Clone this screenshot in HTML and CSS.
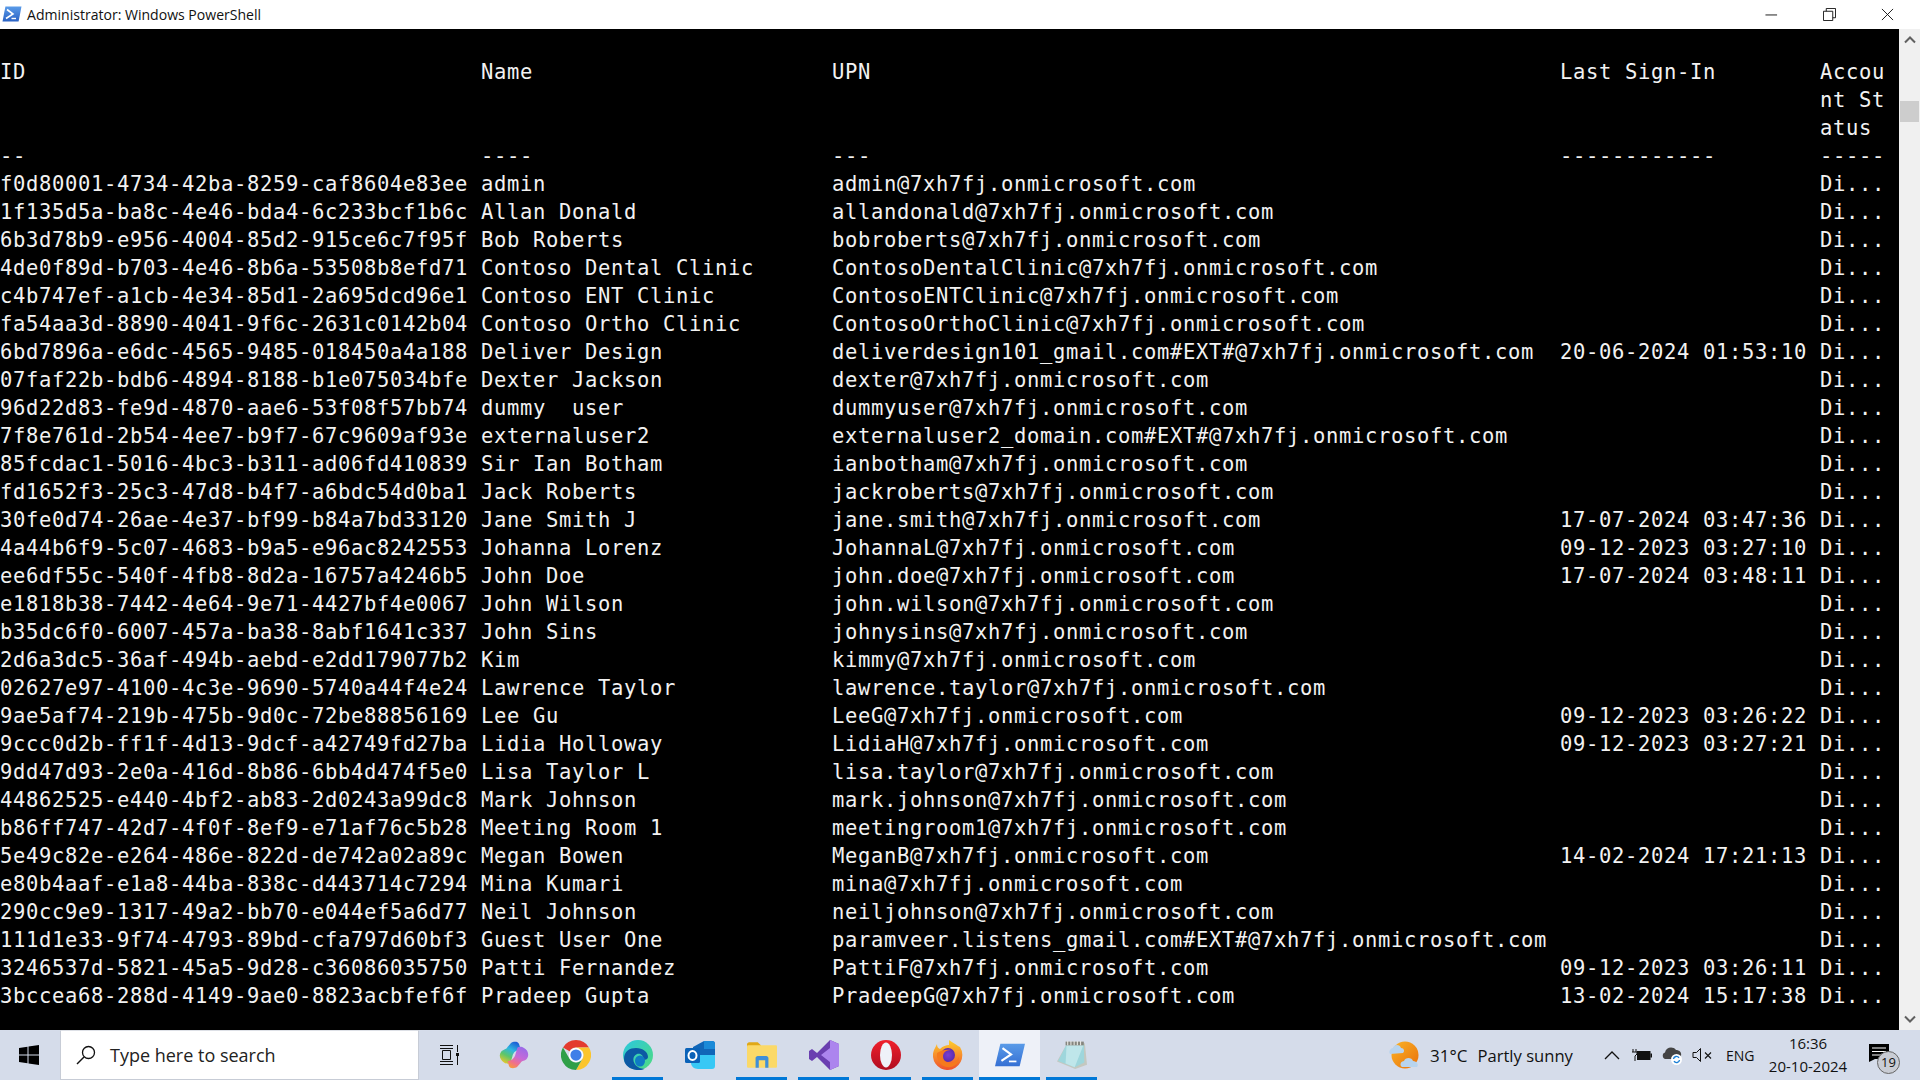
FILE: index.html
```html
<!DOCTYPE html>
<html lang="en">
<head>
<meta charset="utf-8">
<title>Administrator: Windows PowerShell</title>
<link rel="stylesheet" href="styles.css">
</head>
<body>
<header class="titlebar">
  <div class="title-left">
    <svg class="ps-title" viewBox="0 0 20 16"><defs><linearGradient id="psa" x1="0" y1="0" x2="0" y2="1"><stop offset="0" stop-color="#5a9be8"/><stop offset="1" stop-color="#2a62c4"/></linearGradient></defs><path d="M3.4 0.5H19.5L16.6 15.5H0.5Z" fill="url(#psa)"/><path d="M5 3.5L11 8L4 12.5" fill="none" stroke="#fff" stroke-width="1.6"/><path d="M9.5 12.5H14" stroke="#fff" stroke-width="1.4"/></svg>
    <span class="title-text">Administrator: Windows PowerShell</span>
  </div>
  <div class="win-controls">
    <svg class="wc" viewBox="0 0 14 14"><path d="M0.5 7.5H13" stroke="#111" stroke-width="1"/></svg>
    <svg class="wc" viewBox="0 0 14 14"><path d="M0.5 3.5H10.5V13.5H0.5ZM3.5 3.5V0.5H13.5V10.5H10.5" fill="none" stroke="#111" stroke-width="1"/></svg>
    <svg class="wc" viewBox="0 0 14 14"><path d="M1 1L13 13M13 1L1 13" stroke="#111" stroke-width="1"/></svg>
  </div>
</header>

<main class="window">
  <section class="console">
    <div class="row"><span>ID</span><span>Name</span><span>UPN</span><span>Last Sign-In</span><span>Accou<br>nt St<br>atus</span></div>
    <div class="row"><span>--</span><span>----</span><span>---</span><span>------------</span><span>-----</span></div>
    <div class="row"><span>f0d80001-4734-42ba-8259-caf8604e83ee</span><span>admin</span><span>admin@7xh7fj.onmicrosoft.com</span><span></span><span>Di...</span></div>
    <div class="row"><span>1f135d5a-ba8c-4e46-bda4-6c233bcf1b6c</span><span>Allan Donald</span><span>allandonald@7xh7fj.onmicrosoft.com</span><span></span><span>Di...</span></div>
    <div class="row"><span>6b3d78b9-e956-4004-85d2-915ce6c7f95f</span><span>Bob Roberts</span><span>bobroberts@7xh7fj.onmicrosoft.com</span><span></span><span>Di...</span></div>
    <div class="row"><span>4de0f89d-b703-4e46-8b6a-53508b8efd71</span><span>Contoso Dental Clinic</span><span>ContosoDentalClinic@7xh7fj.onmicrosoft.com</span><span></span><span>Di...</span></div>
    <div class="row"><span>c4b747ef-a1cb-4e34-85d1-2a695dcd96e1</span><span>Contoso ENT Clinic</span><span>ContosoENTClinic@7xh7fj.onmicrosoft.com</span><span></span><span>Di...</span></div>
    <div class="row"><span>fa54aa3d-8890-4041-9f6c-2631c0142b04</span><span>Contoso Ortho Clinic</span><span>ContosoOrthoClinic@7xh7fj.onmicrosoft.com</span><span></span><span>Di...</span></div>
    <div class="row"><span>6bd7896a-e6dc-4565-9485-018450a4a188</span><span>Deliver Design</span><span>deliverdesign101_gmail.com#EXT#@7xh7fj.onmicrosoft.com</span><span>20-06-2024 01:53:10</span><span>Di...</span></div>
    <div class="row"><span>07faf22b-bdb6-4894-8188-b1e075034bfe</span><span>Dexter Jackson</span><span>dexter@7xh7fj.onmicrosoft.com</span><span></span><span>Di...</span></div>
    <div class="row"><span>96d22d83-fe9d-4870-aae6-53f08f57bb74</span><span>dummy  user</span><span>dummyuser@7xh7fj.onmicrosoft.com</span><span></span><span>Di...</span></div>
    <div class="row"><span>7f8e761d-2b54-4ee7-b9f7-67c9609af93e</span><span>externaluser2</span><span>externaluser2_domain.com#EXT#@7xh7fj.onmicrosoft.com</span><span></span><span>Di...</span></div>
    <div class="row"><span>85fcdac1-5016-4bc3-b311-ad06fd410839</span><span>Sir Ian Botham</span><span>ianbotham@7xh7fj.onmicrosoft.com</span><span></span><span>Di...</span></div>
    <div class="row"><span>fd1652f3-25c3-47d8-b4f7-a6bdc54d0ba1</span><span>Jack Roberts</span><span>jackroberts@7xh7fj.onmicrosoft.com</span><span></span><span>Di...</span></div>
    <div class="row"><span>30fe0d74-26ae-4e37-bf99-b84a7bd33120</span><span>Jane Smith J</span><span>jane.smith@7xh7fj.onmicrosoft.com</span><span>17-07-2024 03:47:36</span><span>Di...</span></div>
    <div class="row"><span>4a44b6f9-5c07-4683-b9a5-e96ac8242553</span><span>Johanna Lorenz</span><span>JohannaL@7xh7fj.onmicrosoft.com</span><span>09-12-2023 03:27:10</span><span>Di...</span></div>
    <div class="row"><span>ee6df55c-540f-4fb8-8d2a-16757a4246b5</span><span>John Doe</span><span>john.doe@7xh7fj.onmicrosoft.com</span><span>17-07-2024 03:48:11</span><span>Di...</span></div>
    <div class="row"><span>e1818b38-7442-4e64-9e71-4427bf4e0067</span><span>John Wilson</span><span>john.wilson@7xh7fj.onmicrosoft.com</span><span></span><span>Di...</span></div>
    <div class="row"><span>b35dc6f0-6007-457a-ba38-8abf1641c337</span><span>John Sins</span><span>johnysins@7xh7fj.onmicrosoft.com</span><span></span><span>Di...</span></div>
    <div class="row"><span>2d6a3dc5-36af-494b-aebd-e2dd179077b2</span><span>Kim</span><span>kimmy@7xh7fj.onmicrosoft.com</span><span></span><span>Di...</span></div>
    <div class="row"><span>02627e97-4100-4c3e-9690-5740a44f4e24</span><span>Lawrence Taylor</span><span>lawrence.taylor@7xh7fj.onmicrosoft.com</span><span></span><span>Di...</span></div>
    <div class="row"><span>9ae5af74-219b-475b-9d0c-72be88856169</span><span>Lee Gu</span><span>LeeG@7xh7fj.onmicrosoft.com</span><span>09-12-2023 03:26:22</span><span>Di...</span></div>
    <div class="row"><span>9ccc0d2b-ff1f-4d13-9dcf-a42749fd27ba</span><span>Lidia Holloway</span><span>LidiaH@7xh7fj.onmicrosoft.com</span><span>09-12-2023 03:27:21</span><span>Di...</span></div>
    <div class="row"><span>9dd47d93-2e0a-416d-8b86-6bb4d474f5e0</span><span>Lisa Taylor L</span><span>lisa.taylor@7xh7fj.onmicrosoft.com</span><span></span><span>Di...</span></div>
    <div class="row"><span>44862525-e440-4bf2-ab83-2d0243a99dc8</span><span>Mark Johnson</span><span>mark.johnson@7xh7fj.onmicrosoft.com</span><span></span><span>Di...</span></div>
    <div class="row"><span>b86ff747-42d7-4f0f-8ef9-e71af76c5b28</span><span>Meeting Room 1</span><span>meetingroom1@7xh7fj.onmicrosoft.com</span><span></span><span>Di...</span></div>
    <div class="row"><span>5e49c82e-e264-486e-822d-de742a02a89c</span><span>Megan Bowen</span><span>MeganB@7xh7fj.onmicrosoft.com</span><span>14-02-2024 17:21:13</span><span>Di...</span></div>
    <div class="row"><span>e80b4aaf-e1a8-44ba-838c-d443714c7294</span><span>Mina Kumari</span><span>mina@7xh7fj.onmicrosoft.com</span><span></span><span>Di...</span></div>
    <div class="row"><span>290cc9e9-1317-49a2-bb70-e044ef5a6d77</span><span>Neil Johnson</span><span>neiljohnson@7xh7fj.onmicrosoft.com</span><span></span><span>Di...</span></div>
    <div class="row"><span>111d1e33-9f74-4793-89bd-cfa797d60bf3</span><span>Guest User One</span><span>paramveer.listens_gmail.com#EXT#@7xh7fj.onmicrosoft.com</span><span></span><span>Di...</span></div>
    <div class="row"><span>3246537d-5821-45a5-9d28-c36086035750</span><span>Patti Fernandez</span><span>PattiF@7xh7fj.onmicrosoft.com</span><span>09-12-2023 03:26:11</span><span>Di...</span></div>
    <div class="row"><span>3bccea68-288d-4149-9ae0-8823acbfef6f</span><span>Pradeep Gupta</span><span>PradeepG@7xh7fj.onmicrosoft.com</span><span>13-02-2024 15:17:38</span><span>Di...</span></div>
  </section>
  <aside class="scrollbar">
    <svg class="arrow" viewBox="0 0 12 8"><path d="M1 6.5L6 1.5L11 6.5" fill="none" stroke="#606060" stroke-width="2"/></svg>
    <div class="thumb"></div>
    <svg class="arrow arrow-down" viewBox="0 0 12 8"><path d="M1 1.5L6 6.5L11 1.5" fill="none" stroke="#606060" stroke-width="2"/></svg>
  </aside>
</main>

<footer class="taskbar">
  <div class="start">
    <svg class="winlogo" viewBox="0 0 20 20"><path d="M0 2.9L8.5 1.7V9.5H0ZM9.5 1.5L20 0V9.5H9.5ZM0 10.5H8.5V18.3L0 17.1ZM9.5 10.5H20V20L9.5 18.5Z" fill="#000"/></svg>
  </div>
  <div class="search">
    <svg class="lens" viewBox="0 0 20 20"><circle cx="12.5" cy="7.5" r="6" fill="none" stroke="#111" stroke-width="1.3"/><path d="M8 12L1 19" stroke="#111" stroke-width="1.5"/></svg>
    <span>Type here to search</span>
  </div>
  <div class="apps">
    <div class="slot"><svg class="ic-tv" viewBox="0 0 20 20"><path d="M0 .5H13M0 19.5H13M2.5 5.5H10.5V14.5H2.5ZM0 16.5H13M0 3.5H13M17.5 0V7M17.5 11V20" fill="none" stroke="#111" stroke-width="1"/><rect x="16" y="8" width="3" height="3" fill="#111"/></svg></div>

    <div class="slot"><svg class="ic" viewBox="0 0 30 30"><defs><linearGradient id="cpa" x1="0.7" y1="0" x2="0.2" y2="1"><stop offset="0" stop-color="#1b5fd6"/><stop offset=".35" stop-color="#2fb6e0"/><stop offset=".65" stop-color="#5cc66a"/><stop offset="1" stop-color="#f3c826"/></linearGradient><linearGradient id="cpb" x1="0.7" y1="0" x2="0.2" y2="1"><stop offset="0" stop-color="#9a6be8"/><stop offset=".45" stop-color="#c66ad8"/><stop offset=".75" stop-color="#f0708a"/><stop offset="1" stop-color="#f79a3c"/></linearGradient></defs><path d="M12 3C14 1.5 19 1 20 4L22 10C17 10 14.5 12 13.5 16L11.5 23C10 24 7 24 5 22.500C1 20 -0.500 15 2 12C4 9 7 10 8.500 7Z" fill="url(#cpa)"/><path d="M18 27C16 28.500 11 29 10 26L8.500 21C13 21 15.500 18 16.500 14L18.500 7.500C20 6.500 23 6.500 25 8C29 10 30.500 15 28 18.500C26 21.500 23 20 21.500 23Z" fill="url(#cpb)"/></svg></div>

    <div class="slot"><svg class="ic" viewBox="0 0 48 48"><path d="M24 0A24 24 0 0 1 44.800 12H24A12 12 0 0 0 13.600 18L3.200 12A24 24 0 0 1 24 0Z" fill="#e33b2e"/><path d="M44.800 12A24 24 0 0 1 24 48L34.400 30A12 12 0 0 0 34.400 18L24 12Z" fill="#fbc52d"/><path d="M3.200 12A24 24 0 0 0 24 48L34.400 30A12 12 0 0 1 13.600 30Z" fill="#2f9f48"/><circle cx="24" cy="24" r="11.500" fill="#fff"/><circle cx="24" cy="24" r="9" fill="#3f7fe8"/></svg></div>

    <div class="slot running"><svg class="ic" viewBox="0 0 30 30"><defs><linearGradient id="eda" x1="0" y1="0" x2="1" y2="1"><stop offset="0" stop-color="#2bc7e0"/><stop offset="1" stop-color="#4fdc7e"/></linearGradient></defs><circle cx="15" cy="15" r="15" fill="url(#eda)"/><path d="M1 19C1 11 7 8 13 8C20 8 25 12 25 17C25 19 23 20 20 20C21 15 17 13 14 14C9 16 9 23 15 27C17 28.500 20 29 22 28.500C19 30.500 15 30.500 11 29.500C5 28 1 24 1 19Z" fill="#0c59a4"/><ellipse cx="17" cy="21" rx="5" ry="5.500" fill="#0f7bc4"/></svg></div>

    <div class="slot"><svg class="ic" viewBox="0 0 30 28"><path d="M8 6L19 0H27C29 0 30 1 30 3V14L8 14Z" fill="#1066b8"/><path d="M19 0H27C29 0 30 1 30 3V8H19Z" fill="#1a8ad8"/><path d="M6 14H30V25C30 27 29 28 27 28H13C9 28 6 25 6 22Z" fill="#37c8f5"/><rect x="0" y="7" width="15" height="15" rx="1.500" fill="#0a62b8"/><ellipse cx="7.500" cy="14.500" rx="4" ry="4.500" fill="none" stroke="#fff" stroke-width="2"/></svg></div>

    <div class="slot running"><svg class="ic" viewBox="0 0 28 24"><path d="M0 2C0 1 1 0 2 0H10L13 3V6H0Z" fill="#e0a817"/><rect x="0" y="3" width="28" height="21" rx="1" fill="#fbd968"/><path d="M8 24V15C8 14 9 13 10 13H18C19 13 20 14 20 15V24H17V17H11V24Z" fill="#3f8fd8"/></svg></div>

    <div class="slot running"><svg class="ic" viewBox="0 0 30 30"><path d="M21 0L30 4V26L21 30L8 17L3 21L0 19V11L3 9L8 13Z" fill="#6a3fb0"/><path d="M21 0L30 4V26L21 30L21 8L12 15L21 22Z" fill="#ac85ee" fill-rule="evenodd"/></svg></div>

    <div class="slot running"><svg class="ic" viewBox="0 0 30 30"><defs><linearGradient id="opa" x1="0" y1="0" x2="0" y2="1"><stop offset="0" stop-color="#f0202c"/><stop offset="1" stop-color="#b00d20"/></linearGradient></defs><circle cx="15" cy="15" r="15" fill="url(#opa)"/><ellipse cx="15" cy="15" rx="6" ry="12.500" fill="#eef1f8"/></svg></div>

    <div class="slot running"><svg class="ic" viewBox="0 0 30 30"><defs><linearGradient id="ffa" x1="0.500" y1="0" x2="0.500" y2="1"><stop offset="0" stop-color="#ffd02c"/><stop offset="1" stop-color="#f0502c"/></linearGradient><radialGradient id="ffb"><stop offset="0" stop-color="#7a3fd0"/><stop offset="1" stop-color="#5a2cae"/></radialGradient></defs><path d="M15 30A14.500 14.500 0 0 1 1 10L4 4C4 7 5 8 7 9C10 6 13 5 16 5L16 0C20 3 23 4 25 6L27 7A15 15 0 0 1 15 30Z" fill="url(#ffa)"/><circle cx="15" cy="15" r="7" fill="url(#ffb)"/><path d="M4 13C8 10 14 9 18 10C15 10 12 11 11 13C9 16 10 21 15 23C20 24 24 21 26 17C26 24 20 28 14 27C8 26 3 20 4 13Z" fill="#f57a1c"/></svg></div>

    <div class="slot running active"><svg class="ic" viewBox="0 0 28 22"><defs><linearGradient id="psb" x1="0" y1="0" x2="0" y2="1"><stop offset="0" stop-color="#5a9be8"/><stop offset="1" stop-color="#3570d4"/></linearGradient></defs><path d="M5 0.500H28L23 21.500H0Z" fill="url(#psb)"/><path d="M7 4.500L15 10.500L6 16.500" fill="none" stroke="#fff" stroke-width="2"/><path d="M13 17H20" stroke="#fff" stroke-width="1.600"/></svg></div>

    <div class="slot running"><svg class="ic" viewBox="0 0 28 28"><path d="M9 4L26 3L28 23L17 27L0 20Z" fill="#c4c8c0"/><path d="M9 4L25 4L25.500 21L16.500 25.500L1 19.500Z" fill="#9ed6dc"/><path d="M9 4L25 4L16.500 25.500L8 22Z" fill="#bfe6ea"/><path d="M8 1.500H25V5H8Z" fill="#85857e"/><path d="M10 1V5M13 1V5M16 1V5M19 1V5M22 1V5" stroke="#e8e8e4" stroke-width="1"/></svg></div>
  </div>

  <div class="tray">
    <div class="weather">
      <svg class="wx" viewBox="0 0 30 30"><defs><linearGradient id="wxa" x1="0" y1="0" x2="1" y2="1"><stop offset="0" stop-color="#fbb425"/><stop offset="1" stop-color="#e8700c"/></linearGradient></defs><circle cx="16" cy="15" r="13.500" fill="url(#wxa)"/><path d="M1 14C-1 11 2 8 4 8C5 4 11 4 12 8C15 8 16 11 14 13Z" fill="#b8d4ee"/><path d="M13 27C10 25 12 21 15 21C16 17 23 17 24 21C28 21 30 25 28 27Z" fill="#b8d4ee"/></svg>
      <span class="temp">31°C</span>
      <span>Partly sunny</span>
    </div>
    <svg class="ti-chev" viewBox="0 0 16 10"><path d="M1 9L8 2L15 9" fill="none" stroke="#111" stroke-width="1.300"/></svg>
    <svg class="ti-batt" viewBox="0 0 20 12"><path d="M1 0V3M4 0V3M0 3H5V5L3 7V12" fill="none" stroke="#111" stroke-width="1"/><rect x="5" y="2" width="13.500" height="9" fill="#111"/><rect x="18.500" y="4.500" width="1.500" height="4" fill="#111"/></svg>
    <svg class="ti-cloud" viewBox="0 0 20 20"><path d="M3 14C0 13 0 8 3 7.500C4 2 11 1 14 5C17 5 20 7 19 11C18 13 16 14 14 14Z" fill="#444"/><circle cx="14.500" cy="14.500" r="5.500" fill="#fff"/><path d="M11.500 14A3 3 0 0 1 17 12.800M17.500 15A3 3 0 0 1 12 16.200" fill="none" stroke="#1b7fd6" stroke-width="1.400"/></svg>
    <svg class="ti-spk" viewBox="0 0 20 14"><path d="M1 4.500H4.500L8.500 .5V13.500L4.500 9.500H1Z" fill="none" stroke="#111" stroke-width="1"/><path d="M13 4.500L19 10.500M19 4.500L13 10.500" stroke="#111" stroke-width="1.100"/></svg>
    <span class="lang">ENG</span>
    <div class="clock"><span>16:36</span><span>20-10-2024</span></div>
    <div class="notif">
      <svg class="notif-ic" viewBox="0 0 20 18"><path d="M0 0H20V15H6L0 18Z" fill="#000"/><path d="M3 4H17M3 7.500H17M3 11H17" stroke="#fff" stroke-width="1"/></svg>
      <span class="badge">19</span>
    </div>
  </div>
</footer>
</body>
</html>
```

FILE: styles.css
```css
* { box-sizing: border-box; }
html, body { margin: 0; height: 100%; }
body {
  width: 1920px;
  height: 1080px;
  overflow: hidden;
  display: flex;
  flex-direction: column;
  background: #000;
  font-family: "Open Sans", "Noto Sans", sans-serif;
}

/* Title bar */
.titlebar {
  height: 29px;
  flex: none;
  background: #fff;
  display: flex;
  align-items: center;
  justify-content: space-between;
}
.title-left { display: flex; align-items: center; padding-left: 2px; }
.ps-title { width: 20px; height: 16px; margin-top: -1px; }
.title-text { margin-left: 5px; font-size: 14.05px; color: #111; }
.win-controls { display: flex; gap: 45px; padding-right: 26px; }
.wc { width: 13px; height: 13px; display: block; margin-top: -1px; }

/* Console */
.window { flex: none; height: 1001px; display: flex; }
.console {
  width: 1899px;
  padding-top: 29px;
  background: #000;
  color: #f2f2f2;
  font-family: "DejaVu Sans Mono", "Liberation Mono", monospace;
  font-size: 20.5px;
  letter-spacing: 0.658px;
  line-height: 28px;
  overflow: hidden;
}
.row { display: grid; grid-template-columns: 481px 351px 728px 260px 65px; }
.row span { display: block; white-space: pre; }

/* Scrollbar */
.scrollbar {
  width: 21px;
  background: #f0f0f0;
  display: flex;
  flex-direction: column;
  align-items: center;
}
.arrow { width: 12px; height: 8px; margin-top: 7px; }
.arrow-down { margin-top: auto; margin-bottom: 7px; }
.thumb { width: 19px; height: 21px; background: #cdcdcd; margin-top: 57px; }

/* Taskbar */
.taskbar {
  height: 50px;
  flex: none;
  background: #d5dcea;
  display: flex;
  align-items: stretch;
  color: #111;
}
.start { width: 60px; display: flex; align-items: center; justify-content: center; }
.winlogo { width: 20px; height: 20px; margin-left: -2px; }
.search {
  width: 359px;
  background: #fff;
  border: 1px solid #c7ccd6;
  border-top-color: #dde0e6;
  display: flex;
  align-items: center;
  padding-left: 15px;
  font-size: 18px;
  color: #222;
}
.lens { width: 20px; height: 20px; margin-right: 14px; flex: none; }

.apps { display: flex; margin-left: 2px; }
.slot {
  width: 62px;
  position: relative;
  display: flex;
  align-items: center;
  justify-content: center;
}
.slot.running::after {
  content: "";
  position: absolute;
  left: 5px;
  right: 6px;
  bottom: 0;
  height: 3px;
  background: #0078d7;
}
.slot.active { background: #eef1f8; margin-right: 1px; width: 61px; }
.slot.active::after { left: 0; right: 0; }
.ic { width: 30px; height: 30px; }
.ic-tv { width: 20px; height: 20px; margin-left: -4px; }

.tray { display: flex; align-items: center; margin-left: auto; width: 531px; }
.weather { display: flex; align-items: center; font-size: 16.6px; width: 215px; }
.wx { width: 30px; height: 30px; margin-right: 11px; }
.temp { margin-right: 10px; font-size: 17px; }
.ti-chev { width: 16px; height: 10px; margin-right: 12px; }
.ti-batt { width: 20px; height: 12px; margin-right: 10px; }
.ti-cloud { width: 20px; height: 20px; margin-right: 10px; }
.ti-spk { width: 20px; height: 14px; margin-right: 14px; }
.lang { font-size: 14px; width: 30px; }
.clock {
  width: 110px;
  margin-right: 7px;
  margin-left: -3px;
  display: flex;
  flex-direction: column;
  align-items: center;
  gap: 4px;
  font-size: 15px;
  line-height: 19px;
}
.notif { position: relative; width: 34px; height: 36px; margin-left: -1px; }
.notif-ic { position: absolute; left: 0; top: 7px; width: 20px; height: 18px; }
.badge {
  position: absolute;
  left: 8px;
  top: 14px;
  width: 23px;
  height: 23px;
  border-radius: 50%;
  border: 1px solid #666;
  background: #c9ccd4;
  font-size: 13px;
  line-height: 21px;
  text-align: center;
  color: #111;
}
```
